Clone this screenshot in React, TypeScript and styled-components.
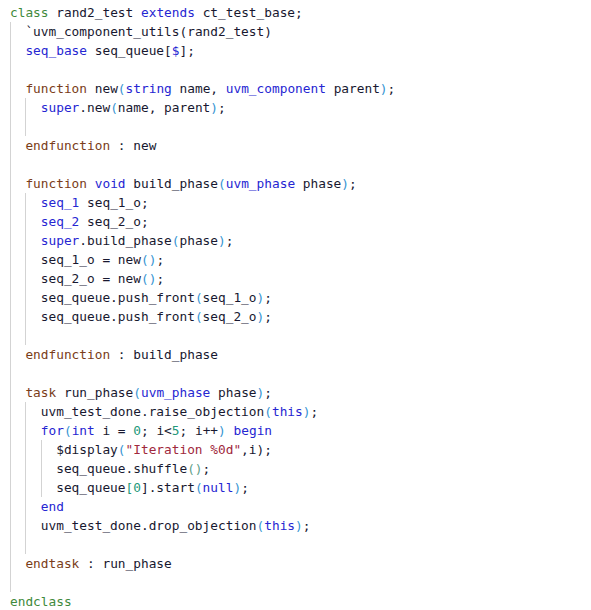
import React from "react";
import styled, { createGlobalStyle } from "styled-components";

const CW = 7.7;
const IND = CW * 2;

const Global = createGlobalStyle`
  html, body { margin: 0; padding: 0; background: #ffffff; }
`;

const palette = {
  d: "#181830",
  g: "#3f8a3c",
  b: "#2626d2",
  f: "#7a3d19",
  p: "#3594d2",
  n: "#23987a",
  s: "#a0283c",
  y: "#5fa088",
} as const;

type C = keyof typeof palette;

const Editor = styled.div`
  padding: 3px 0 0 10px;
  font-family: "DejaVu Sans Mono", "Liberation Mono", monospace;
  font-size: 12.8px;
  color: ${palette.d};
  background: #ffffff;
  width: 591px;
  height: 610px;
  box-sizing: border-box;
  overflow: hidden;
`;

const Line = styled.div`
  height: 19px;
  line-height: 19px;
  white-space: pre;
`;

const Block = styled.div`
  border-left: 1px solid #d3d3d3;
  padding-left: ${IND - 1}px;
`;

const Tok = styled.span<{ $c: C }>`
  color: ${(p) => palette[p.$c]};
`;

type Seg = [C, string];

const L = ({ segs }: { segs: Seg[] }) => (
  <Line>
    {segs.length === 0 ? " " : segs.map(([c, t], i) => <Tok key={i} $c={c}>{t}</Tok>)}
  </Line>
);

export default function App() {
  return (
    <>
      <Global />
      <Editor>
        <L segs={[["g", "class"], ["d", " rand2_test "], ["b", "extends"], ["d", " ct_test_base;"]]} />
        <Block>
          <L segs={[["d", "`uvm_component_utils(rand2_test)"]]} />
          <L segs={[["b", "seq_base"], ["d", " seq_queue["], ["b", "$"], ["d", "];"]]} />
          <L segs={[]} />
          <L segs={[["f", "function"], ["d", " new"], ["p", "("], ["b", "string"], ["d", " name, "], ["b", "uvm_component"], ["d", " parent"], ["p", ")"], ["d", ";"]]} />
          <Block>
            <L segs={[["b", "super"], ["d", ".new"], ["p", "("], ["d", "name, parent"], ["p", ")"], ["d", ";"]]} />
            <L segs={[]} />
          </Block>
          <L segs={[["f", "endfunction"], ["d", " : new"]]} />
          <L segs={[]} />
          <L segs={[["f", "function"], ["d", " "], ["b", "void"], ["d", " build_phase"], ["p", "("], ["b", "uvm_phase"], ["d", " phase"], ["p", ")"], ["d", ";"]]} />
          <Block>
            <L segs={[["b", "seq_1"], ["d", " seq_1_o;"]]} />
            <L segs={[["b", "seq_2"], ["d", " seq_2_o;"]]} />
            <L segs={[["b", "super"], ["d", ".build_phase"], ["p", "("], ["d", "phase"], ["p", ")"], ["d", ";"]]} />
            <L segs={[["d", "seq_1_o = new"], ["p", "()"], ["d", ";"]]} />
            <L segs={[["d", "seq_2_o = new"], ["p", "()"], ["d", ";"]]} />
            <L segs={[["d", "seq_queue.push_front"], ["p", "("], ["d", "seq_1_o"], ["p", ")"], ["d", ";"]]} />
            <L segs={[["d", "seq_queue.push_front"], ["p", "("], ["d", "seq_2_o"], ["p", ")"], ["d", ";"]]} />
            <L segs={[]} />
          </Block>
          <L segs={[["f", "endfunction"], ["d", " : build_phase"]]} />
          <L segs={[]} />
          <L segs={[["f", "task"], ["d", " run_phase"], ["p", "("], ["b", "uvm_phase"], ["d", " phase"], ["p", ")"], ["d", ";"]]} />
          <Block>
            <L segs={[["d", "uvm_test_done.raise_objection"], ["p", "("], ["b", "this"], ["p", ")"], ["d", ";"]]} />
            <L segs={[["b", "for"], ["p", "("], ["b", "int"], ["d", " i = "], ["n", "0"], ["d", "; i<"], ["n", "5"], ["d", "; i++"], ["p", ")"], ["d", " "], ["b", "begin"]]} />
            <Block>
              <L segs={[["d", "$display"], ["p", "("], ["s", "\"Iteration %0d\""], ["d", ",i);"]]} />
              <L segs={[["d", "seq_queue.shuffle"], ["y", "()"], ["d", ";"]]} />
              <L segs={[["d", "seq_queue"], ["n", "[0"], ["d", "].start"], ["p", "("], ["b", "null"], ["p", ")"], ["d", ";"]]} />
            </Block>
            <L segs={[["b", "end"]]} />
            <L segs={[["d", "uvm_test_done.drop_objection"], ["p", "("], ["b", "this"], ["p", ")"], ["d", ";"]]} />
            <L segs={[]} />
          </Block>
          <L segs={[["f", "endtask"], ["d", " : run_phase"]]} />
          <L segs={[]} />
        </Block>
        <L segs={[["g", "endclass"]]} />
      </Editor>
    </>
  );
}
